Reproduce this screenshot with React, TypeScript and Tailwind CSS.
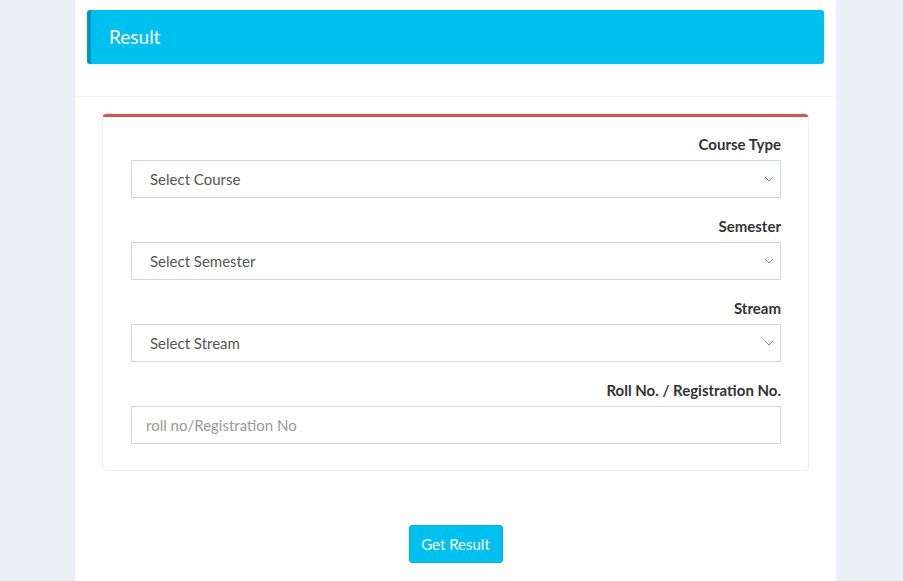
import { useState } from "react";

const fields = [
  { label: "Course Type", placeholder: "Select Course", select: true },
  { label: "Semester", placeholder: "Select Semester", select: true },
  { label: "Stream", placeholder: "Select Stream", select: true },
  { label: "Roll No. / Registration No.", placeholder: "roll no/Registration No", select: false },
];

export default function App() {
  const [roll, setRoll] = useState("");

  return (
    <div className="min-h-screen bg-[#ecf0f5] pl-[75px] pr-[67px] font-['Lato',sans-serif] text-[#333]">
      <div className="bg-white min-h-[581px] pt-[10px]">
        {/* Title bar */}
        <div className="mx-3 h-[54px] flex items-center bg-[#00c0ef] border-l-[4px] border-[#0097bc] rounded-[3px] pl-[18px] shadow-[0_1px_2px_rgba(0,0,0,0.08)]">
          <h1 className="text-white text-[19px]">Result</h1>
        </div>

        <div className="mt-[32px] border-t border-[#f4f4f4] px-[28px] pt-[17px]">
          {/* Form card */}
          <div className="border-t-[3px] border-[#d0574b] rounded-[3px] shadow-[0_0_0_1px_#eeeeee] pl-[28px] pr-[27px] pt-[17px] pb-[26px] flex flex-col gap-[18px]">
            {fields.map((f) => (
              <div key={f.label}>
                <label className="block text-right text-[15px] font-bold leading-5 mb-[6px]">
                  {f.label}
                </label>
                {f.select ? (
                  <div className="h-[38px] border border-[#d2d6de] flex items-center justify-between pl-[18px] pr-[3px]">
                    <span className="text-[15px] text-[#555]">{f.placeholder}</span>
                    <ChevronIcon />
                  </div>
                ) : (
                  <input
                    value={roll}
                    onChange={(e) => setRoll(e.target.value)}
                    placeholder={f.placeholder}
                    className="w-full h-[38px] border border-[#d2d6de] px-[14px] text-[15px] placeholder:text-[#999] outline-none"
                  />
                )}
              </div>
            ))}
          </div>

          <div className="flex justify-center mt-[55px]">
            <button className="h-[38px] w-[94px] bg-[#00c0ef] border border-[#00acd6] rounded-[3px] text-white text-[15px]">
              Get Result
            </button>
          </div>
        </div>
      </div>
    </div>
  );
}

function ChevronIcon() {
  return (
    <svg className="h-[16px] w-[16px] text-[#888]" viewBox="0 0 24 24" fill="none" stroke="currentColor" strokeWidth={1.5}>
      <path strokeLinecap="round" strokeLinejoin="round" d="M6 9l6 6 6-6" />
    </svg>
  );
}
